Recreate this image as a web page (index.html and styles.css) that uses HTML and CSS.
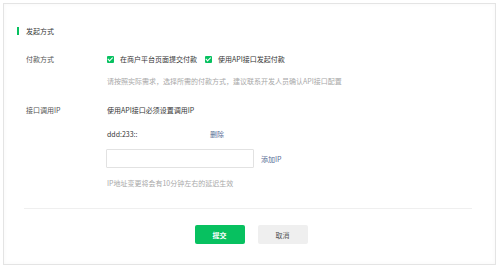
FILE: index.html
```html
<!DOCTYPE html>
<html lang="zh-CN">
<head>
    <meta charset="UTF-8">
    <meta name="viewport" content="width=device-width, initial-scale=1.0">
    <title>发起方式</title>
    <link rel="stylesheet" href="styles.css">
</head>
<body>
    <div class="card">
        <div class="section-title">
            <span class="bar"></span>
            <span>发起方式</span>
        </div>

        <div class="form">
            <div class="row row-pay">
                <div class="label">付款方式</div>
                <div class="field checks">
                    <label class="check"><span class="box"></span>在商户平台页面提交付款</label>
                    <label class="check"><span class="box"></span>使用API接口发起付款</label>
                </div>
            </div>
            <div class="row row-hint1">
                <div class="label"></div>
                <div class="field hint">请按照实际需求，选择所需的付款方式，建议联系开发人员确认API接口配置</div>
            </div>

            <div class="row row-ip">
                <div class="label">接口调用IP</div>
                <div class="field">使用API接口必须设置调用IP</div>
            </div>
            <div class="row row-ipitem">
                <div class="label"></div>
                <div class="field">
                    <span class="ip">ddd:233::</span>
                    <a class="link">删除</a>
                </div>
            </div>
            <div class="row row-input">
                <div class="label"></div>
                <div class="field input-line">
                    <input class="ip-input" type="text">
                    <a class="link">添加IP</a>
                </div>
            </div>
            <div class="row row-hint2">
                <div class="label"></div>
                <div class="field hint">IP地址变更将会有10分钟左右的延迟生效</div>
            </div>
        </div>

        <div class="divider"></div>

        <div class="actions">
            <button class="btn btn-primary">提交</button>
            <button class="btn btn-default">取消</button>
        </div>
    </div>
</body>
</html>
```

FILE: styles.css
```css
body {
    margin: 0;
    background: #ffffff;
    font-family: "Noto Sans CJK SC", "Noto Sans", sans-serif;
    font-size: 7px;
    color: #353535;
}
.card {
    margin: 3px;
    width: 493px;
    height: 262px;
    box-sizing: border-box;
    border: 1px solid #e4e4e4;
    background: #ffffff;
    box-shadow: inset 0 0 4px rgba(0, 0, 0, 0.03);
    padding-top: 22px;
}
.section-title {
    display: flex;
    align-items: center;
    height: 10px;
    line-height: 10px;
    padding-left: 13px;
    color: #353535;
}
.section-title .bar {
    width: 2px;
    height: 8px;
    background: #07c160;
    margin-right: 7px;
}
.form {
    padding-left: 22px;
}
.row {
    display: flex;
    align-items: center;
    line-height: 10px;
}
.label {
    width: 81px;
    flex-shrink: 0;
    color: #555555;
}
.field {
    display: flex;
    align-items: center;
    color: #353535;
}
.row-pay {
    margin-top: 16px;
    height: 14px;
}
.row-hint1 {
    margin-top: 10px;
}
.row-ip {
    margin-top: 19px;
}
.row-ipitem {
    margin-top: 14px;
}
.row-input {
    margin-top: 10px;
}
.row-hint2 {
    margin-top: 10px;
}
.hint {
    color: #a8a8a8;
}
.check {
    display: flex;
    align-items: center;
    margin-right: 8px;
}
.box {
    position: relative;
    width: 7px;
    height: 7px;
    border-radius: 1px;
    background: #07c160;
    margin-right: 6px;
}
.box::after {
    content: "";
    position: absolute;
    left: 2px;
    top: 0.5px;
    width: 1.5px;
    height: 3.5px;
    border: solid #ffffff;
    border-width: 0 1px 1px 0;
    transform: rotate(45deg);
}
.ip {
    width: 103px;
    color: #353535;
}
.link {
    color: #576b95;
    cursor: pointer;
}
.input-line {
    height: 19px;
}
.ip-input {
    width: 148px;
    height: 19px;
    box-sizing: border-box;
    border: 1px solid #e2e2e2;
    border-radius: 1px;
    margin: 0 7px 0 -1px;
    padding: 0 4px;
    font-size: 7px;
    outline: none;
}
.divider {
    margin: 20px 23px 0 20px;
    height: 1px;
    background: #efefef;
}
.actions {
    display: flex;
    justify-content: center;
    gap: 13px;
    margin-top: 16px;
    padding-left: 3px;
}
.btn {
    width: 50px;
    height: 19px;
    border: none;
    border-radius: 2px;
    font-family: inherit;
    font-size: 7px;
    cursor: pointer;
}
.btn-primary {
    background: #07c160;
    color: #ffffff;
    font-weight: bold;
}
.btn-default {
    background: #efefef;
    color: #555555;
}
```
